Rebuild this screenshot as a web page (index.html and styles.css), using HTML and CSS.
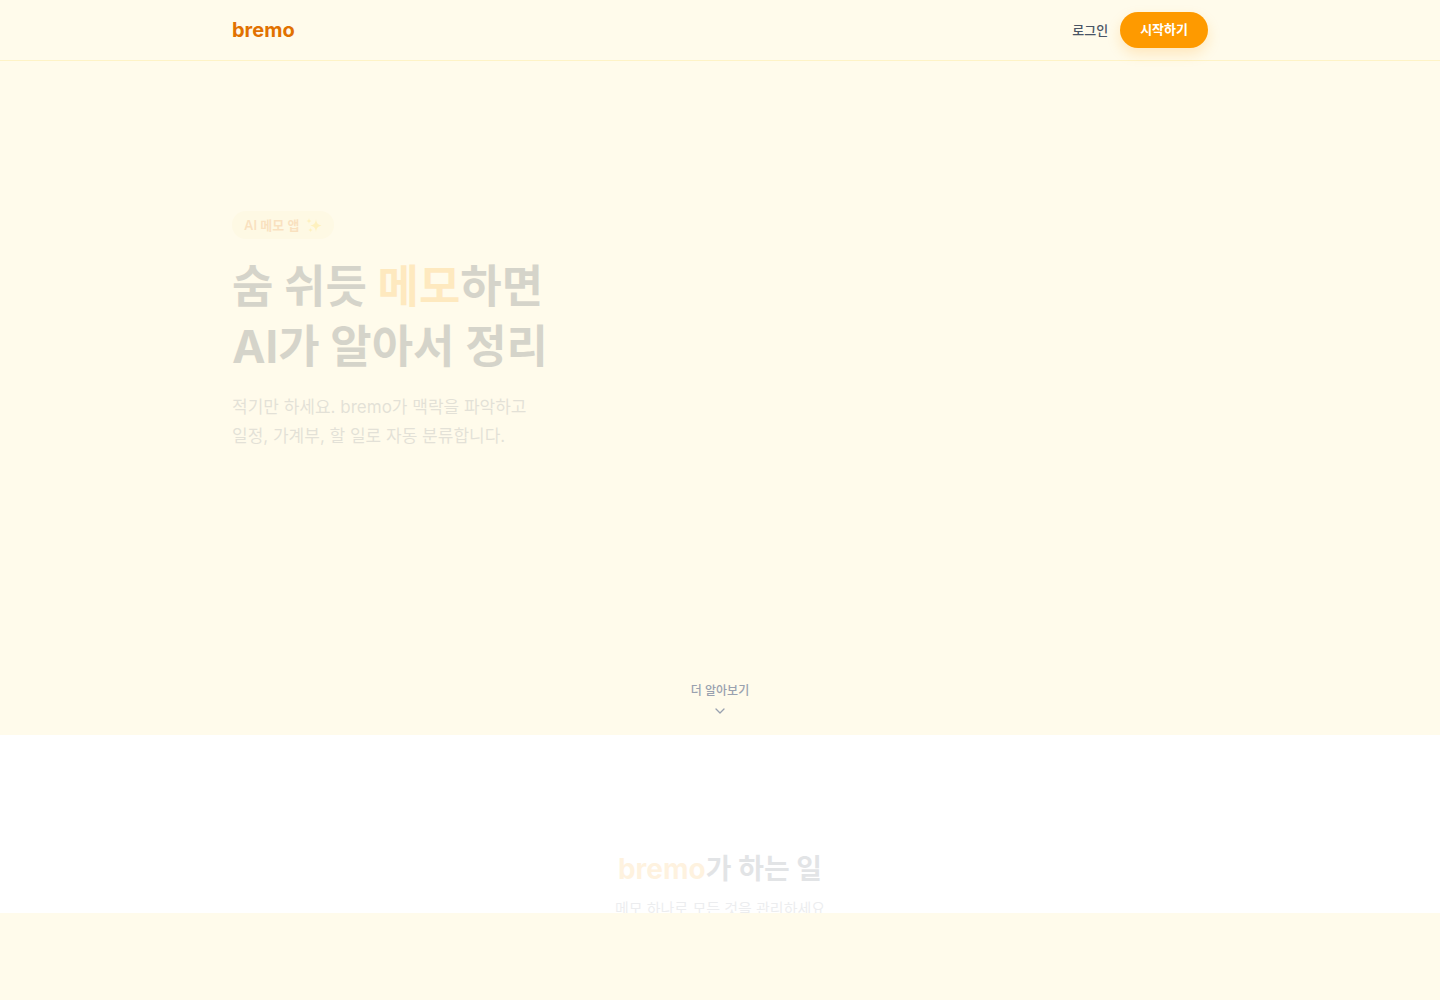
FILE: index.html
```html
<!DOCTYPE html>
<html lang="ko">
  <head>
    <meta charset="UTF-8" />
    <meta name="viewport" content="width=device-width, initial-scale=1.0" />
    <title>bremo</title>
    <link rel="stylesheet" href="styles.css">
  </head>
  <body>
    <header class="header">
      <div class="container header-inner">
        <a class="logo" href="#">bremo</a>
        <nav class="nav">
          <a class="login-link" href="#login">로그인</a>
          <button class="start-button" type="button">시작하기</button>
        </nav>
      </div>
    </header>

    <main>
      <section class="hero">
        <div class="container hero-content">
          <div class="badge">
            AI 메모 앱
            <svg class="sparkles" viewBox="0 0 16 16" aria-hidden="true">
              <path d="M10 2C10.5 6 11.5 7.5 15.5 8.5C11.5 9.5 10.5 11 10 15C9.5 11 8.5 9.5 4.5 8.5C8.5 7.5 9.5 6 10 2Z" />
              <path d="M3 1C3.3 3 3.7 3.5 5.5 4C3.7 4.5 3.3 5 3 7C2.7 5 2.3 4.5 0.5 4C2.3 3.5 2.7 3 3 1Z" />
              <path d="M4.5 10.5C4.7 12 5 12.5 6.5 13C5 13.5 4.7 14 4.5 15.5C4.3 14 4 13.5 2.5 13C4 12.5 4.3 12 4.5 10.5Z" />
            </svg>
          </div>
          <h1 class="hero-title">숨 쉬듯 <em>메모</em>하면<br>AI가 알아서 정리</h1>
          <p class="hero-text">적기만 하세요. bremo가 맥락을 파악하고<br>일정, 가계부, 할 일로 자동 분류합니다.</p>
        </div>
        <a class="scroll-hint" href="#features">
          <span>더 알아보기</span>
          <svg class="chevron" viewBox="0 0 16 16" aria-hidden="true">
            <path d="M4 6l4 4 4-4" />
          </svg>
        </a>
      </section>

      <section class="features" id="features">
        <h2 class="features-title"><em>bremo</em>가 하는 일</h2>
        <p class="features-text">메모 하나로 모든 것을 관리하세요</p>
      </section>
    </main>
  </body>
</html>
```
FILE: styles.css
```css
:root {
  --cream: #fffbeb;
  --cream-dark: #fef3c6;
  --amber: #fe9a00;
  --amber-dark: #e17100;
  --ink: #1e2939;
}

* {
  margin: 0;
  padding: 0;
  box-sizing: border-box;
}

body {
  font-family: Inter, "Noto Sans CJK KR", sans-serif;
  color: var(--ink);
  background-color: var(--cream);
}

a {
  text-decoration: none;
}

em {
  font-style: normal;
}

.container {
  width: 100%;
  max-width: 1024px;
  margin: 0 auto;
  padding: 0 24px;
}

.header {
  border-bottom: 1px solid var(--cream-dark);
}

.header-inner {
  display: flex;
  align-items: center;
  justify-content: space-between;
  height: 60px;
}

.logo {
  font-size: 20px;
  font-weight: 700;
  line-height: 28px;
  color: var(--amber-dark);
}

.nav {
  display: flex;
  align-items: center;
  gap: 12px;
}

.login-link {
  font-size: 13px;
  font-weight: 500;
  line-height: 18px;
  color: #4a5565;
}

.start-button {
  height: 36px;
  padding: 0 20px 2px;
  border: none;
  border-radius: 18px;
  font-family: inherit;
  font-size: 13px;
  font-weight: 700;
  line-height: 20px;
  color: white;
  background-color: var(--amber);
  box-shadow: 0 6px 14px rgba(254, 154, 0, 0.2);
  cursor: pointer;
}

.hero {
  display: flex;
  flex-direction: column;
  justify-content: space-between;
  min-height: 674px;
  padding: 150px 0 16px;
}

.badge {
  display: inline-flex;
  align-items: center;
  gap: 6px;
  height: 28px;
  margin-bottom: 18px;
  padding: 0 12px;
  border-radius: 14px;
  font-size: 13px;
  font-weight: 600;
  line-height: 20px;
  color: var(--amber-dark);
  background-color: var(--cream-dark);
  opacity: 0.18;
}

.sparkles {
  width: 16px;
  height: 16px;
  fill: #fdc700;
}

.hero-title {
  margin-bottom: 16px;
  font-size: 45px;
  font-weight: 700;
  line-height: 60px;
  opacity: 0.18;
}

.hero-title em {
  color: var(--amber);
}

.hero-text {
  font-size: 17px;
  line-height: 29px;
  color: #6a7282;
  opacity: 0.18;
}

.scroll-hint {
  display: flex;
  flex-direction: column;
  align-items: center;
  align-self: center;
  gap: 4px;
  font-size: 12px;
  font-weight: 500;
  line-height: 16px;
  color: #99a1af;
}

.chevron {
  width: 16px;
  height: 16px;
  fill: none;
  stroke: currentColor;
  stroke-width: 1.3;
  stroke-linecap: round;
  stroke-linejoin: round;
}

.features {
  height: 178px;
  padding: 114px 24px 0;
  overflow: hidden;
  text-align: center;
  background-color: white;
}

.features-title {
  margin-bottom: 8px;
  font-size: 28px;
  font-weight: 700;
  line-height: 40px;
  opacity: 0.12;
}

.features-title em {
  color: var(--amber);
}

.features-text {
  font-size: 15px;
  line-height: 24px;
  color: #6a7282;
  opacity: 0.12;
}
```
